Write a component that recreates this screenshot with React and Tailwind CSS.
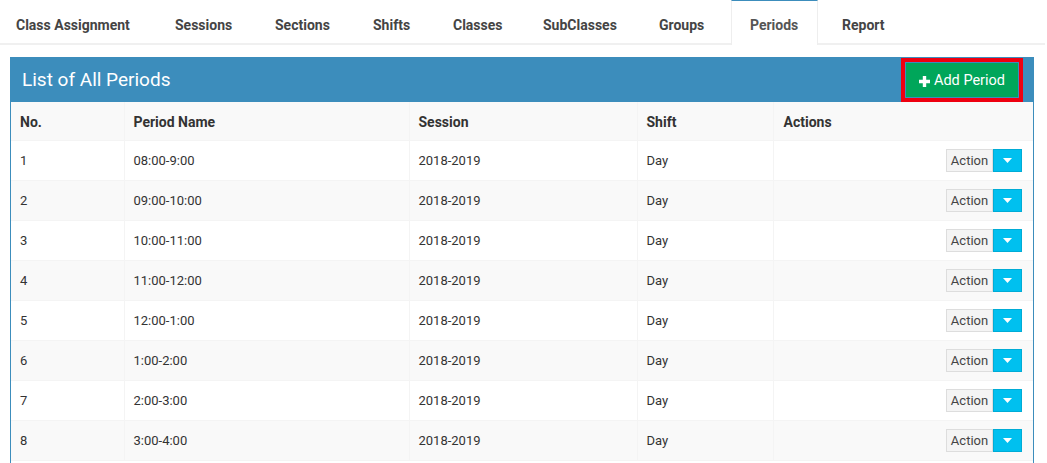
import React from "react";

const tabs = [
  { label: "Class Assignment", w: "w-[157px]", pl: "pl-[16px]" },
  { label: "Sessions", w: "w-[100px]", pl: "pl-[18px]" },
  { label: "Sections", w: "w-[98px]", pl: "pl-[18px]" },
  { label: "Shifts", w: "w-[80px]", pl: "pl-[18px]" },
  { label: "Classes", w: "w-[90px]", pl: "pl-[18px]" },
  { label: "SubClasses", w: "w-[116px]", pl: "pl-[18px]" },
  { label: "Groups", w: "w-[90px]", pl: "pl-[18px]" },
];

const rows = [
  ["1", "08:00-9:00"],
  ["2", "09:00-10:00"],
  ["3", "10:00-11:00"],
  ["4", "11:00-12:00"],
  ["5", "12:00-1:00"],
  ["6", "1:00-2:00"],
  ["7", "2:00-3:00"],
  ["8", "3:00-4:00"],
];

function ActionButton() {
  return (
    <div className="inline-flex h-[23px] align-middle">
      <div className="flex h-full w-[47px] items-center justify-center border border-[#dddddd] bg-[#f4f4f4] pt-px text-[13px] text-[#444]">
        Action
      </div>
      <div className="flex h-full w-[29px] items-center justify-center border border-[#00acd6] bg-[#00c0ef]">
        <svg width="9" height="5" viewBox="0 0 9 5">
          <path d="M0 0 L9 0 L4.5 5 Z" fill="#ffffff" />
        </svg>
      </div>
    </div>
  );
}

export default function App() {
  return (
    <div
      className="h-[463px] w-[1047px] overflow-hidden bg-white text-[#333]"
      style={{ fontFamily: "Roboto, 'Liberation Sans', sans-serif" }}
    >
      {/* Tabs */}
      <div className="flex h-[45px] w-[1045px] border-b-2 border-[#f0f0f0]">
        {tabs.map((t) => (
          <div
            key={t.label}
            className={`flex h-[43px] items-center pt-[7px] ${t.w} ${t.pl} text-[14px] font-bold text-[#444]`}
          >
            {t.label}
          </div>
        ))}
        <div className="-mb-[2px] flex h-[45px] w-[87px] items-center border-x border-t border-x-[#eeeeee] border-t-[#3c8dbc] bg-white pb-[2px] pl-[18px] pt-[6px] text-[14px] font-bold text-[#555]">
          Periods
        </div>
        <div className="ml-[6px] flex h-[43px] w-[90px] items-center pl-[18px] pt-[7px] text-[14px] font-bold text-[#444]">
          Report
        </div>
      </div>

      {/* Panel */}
      <div className="ml-[10px] mt-[12px] w-[1024px] border border-[#3c8dbc]">
        <div className="flex h-[44px] items-center justify-between bg-[#3c8dbc] pl-[11px] pr-[10px]">
          <div className="pt-px text-[19px] text-white">List of All Periods</div>
          <div className="box-border h-[44px] w-[122px] border-4 border-[#ee0010] p-px">
            <div className="flex h-full w-full items-center justify-center gap-[4px] bg-[#00a65a] pt-[2px] text-[14.5px] text-white">
              <svg width="11" height="11" viewBox="0 0 11 11">
                <path d="M3.8 0 H7.2 V3.8 H11 V7.2 H7.2 V11 H3.8 V7.2 H0 V3.8 H3.8 Z" fill="#ffffff" />
              </svg>
              <span>Add Period</span>
            </div>
          </div>
        </div>

        <table className="w-full table-fixed border-collapse text-[13px]">
          <colgroup>
            <col className="w-[113px]" />
            <col className="w-[285px]" />
            <col className="w-[228px]" />
            <col className="w-[136px]" />
            <col />
          </colgroup>
          <thead>
            <tr className="h-[38px] bg-[#f9f9f9] text-[14px] font-bold text-[#333]">
              <th className="border border-t-0 border-l-0 border-[#f4f4f4] px-[9px] pt-[3px] text-left">No.</th>
              <th className="border border-t-0 border-[#f4f4f4] px-[9px] pt-[3px] text-left">Period Name</th>
              <th className="border border-t-0 border-[#f4f4f4] px-[9px] pt-[3px] text-left">Session</th>
              <th className="border border-t-0 border-[#f4f4f4] px-[9px] pt-[3px] text-left">Shift</th>
              <th className="border border-t-0 border-r-0 border-[#f4f4f4] px-[10px] pt-[3px] text-left">Actions</th>
            </tr>
          </thead>
          <tbody>
            {rows.map((r, i) => (
              <tr key={r[0]} className={`h-[40px] ${i % 2 === 1 ? "bg-[#f9f9f9]" : "bg-white"}`}>
                <td className="border border-l-0 border-[#f4f4f4] px-[9px] pt-[2px]">{r[0]}</td>
                <td className="border border-[#f4f4f4] px-[9px] pt-[2px]">{r[1]}</td>
                <td className="border border-[#f4f4f4] px-[9px] pt-[2px]">2018-2019</td>
                <td className="border border-[#f4f4f4] px-[9px] pt-[2px]">Day</td>
                <td className="border border-r-0 border-[#f4f4f4] pr-[11px] pt-px text-right">
                  <ActionButton />
                </td>
              </tr>
            ))}
          </tbody>
        </table>
        <div className="h-[20px] bg-white" />
      </div>
    </div>
  );
}
